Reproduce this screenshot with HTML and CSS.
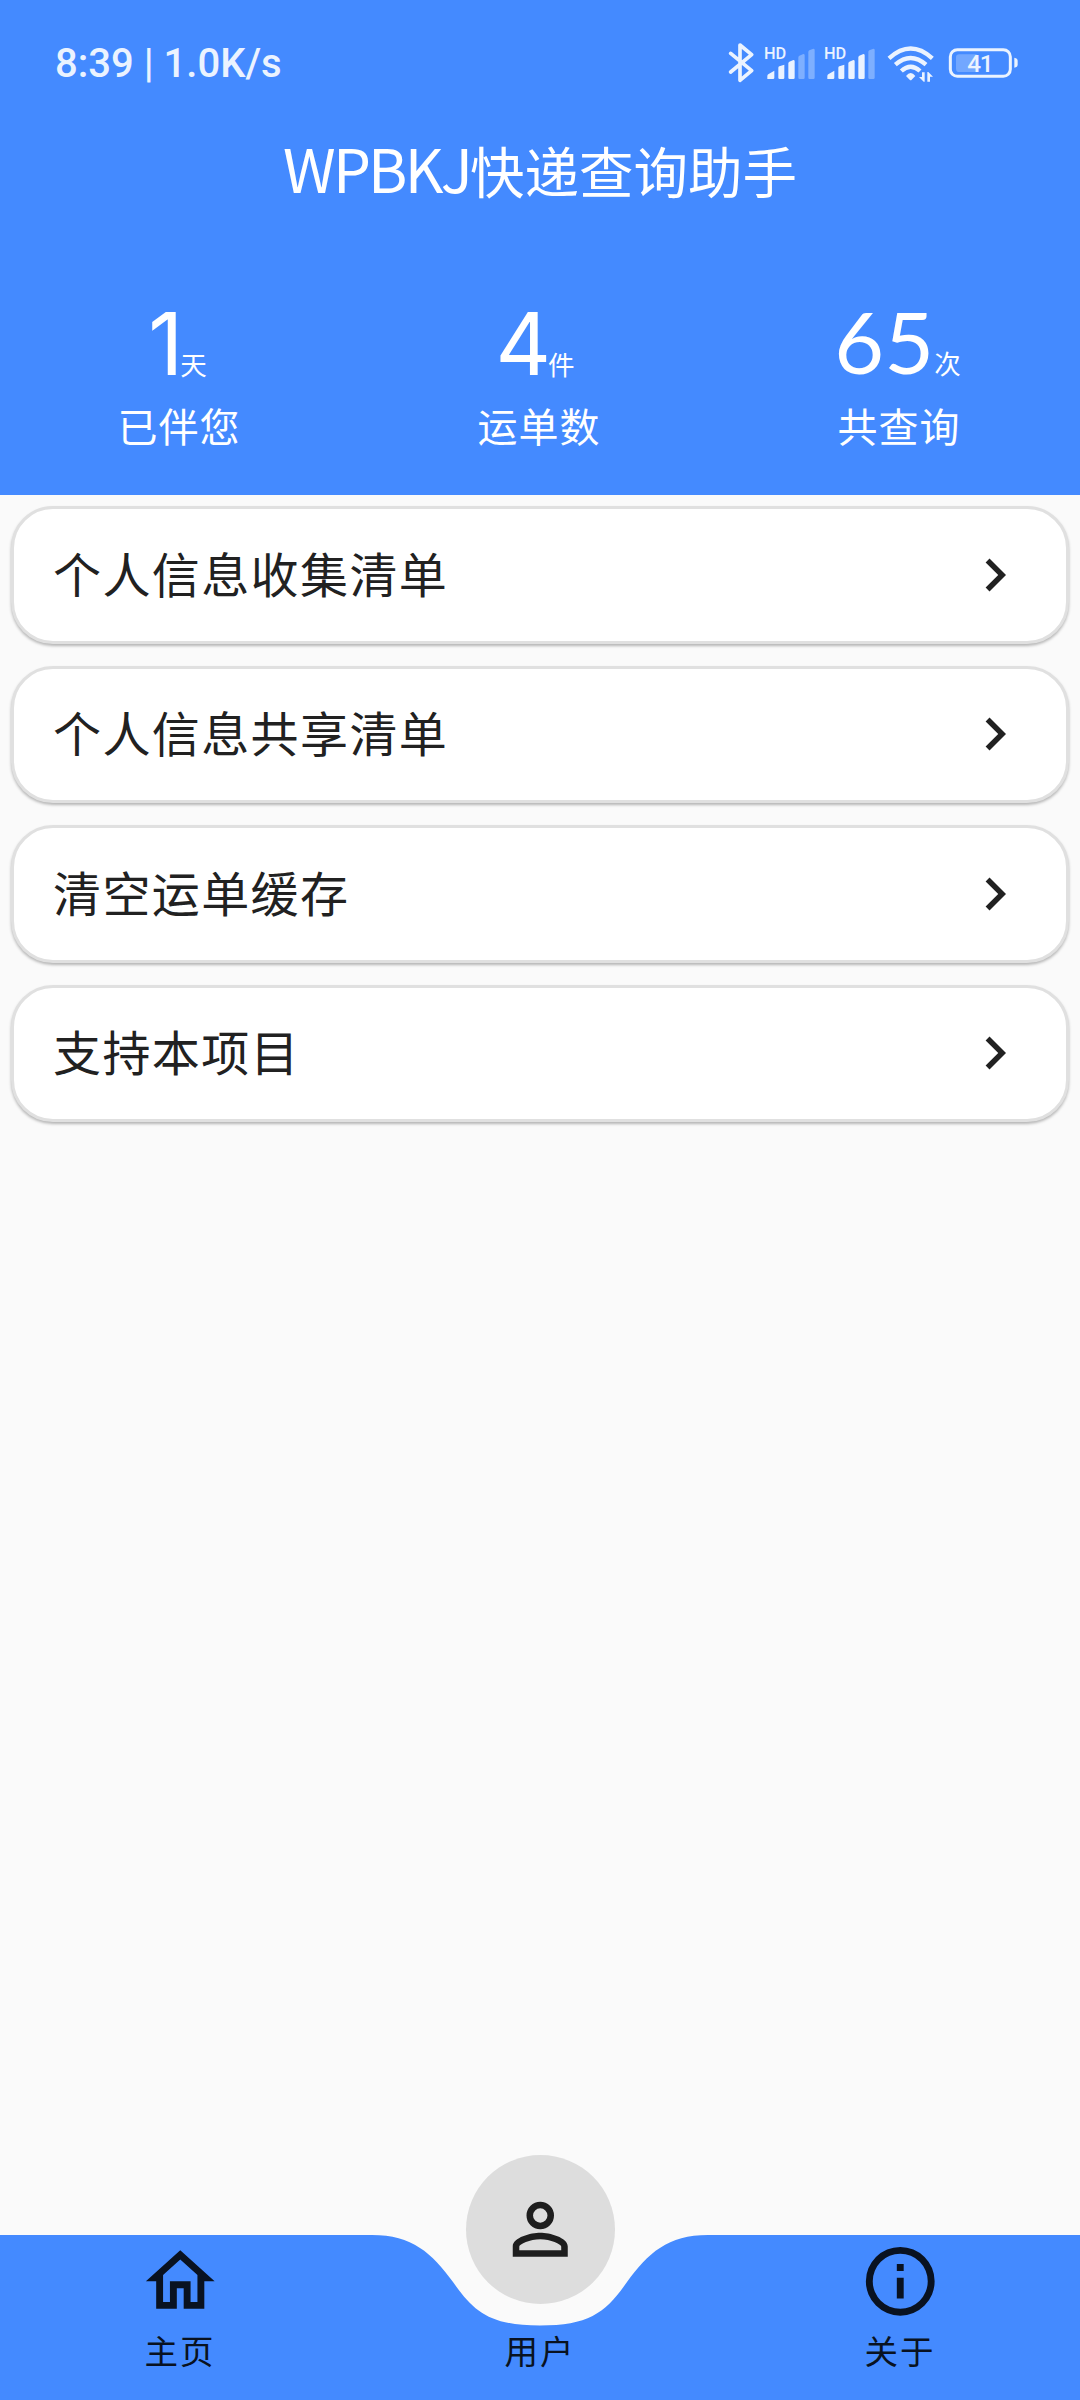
FILE: index.html
```html
<!DOCTYPE html>
<html lang="zh-CN">
<head>
<meta charset="utf-8">
<title>WPBKJ快递查询助手</title>
<link rel="stylesheet" href="styles.css">
</head>
<body>
<svg class="defs" aria-hidden="true">
  <symbol id="chevron" viewBox="0 0 24 24"><path d="M10 6L8.59 7.41 13.17 12l-4.58 4.59L10 18l6-6z"/></symbol>
</svg>
<div class="app">
  <header class="header">
    <div class="status">
      <span class="status-text">8:39 | 1.0K/s</span>
      <div class="status-icons">
        <svg class="bluetooth" viewBox="54 60 78 135"><path d="M62 100L125 152L90 181V75L125 104L62 156" fill="none" stroke="currentColor" stroke-width="11" stroke-linejoin="round" stroke-linecap="round"/></svg>
        <svg class="signal" viewBox="162 60 156 135">
          <text x="162" y="117" class="hd">HD</text>
          <path d="M172 177v-9q0-4 4-6l17-10v21q0 4-4 4zM205 177v-34q0-3 3-4l15-5v39q0 4-4 4h-10q-4 0-4-4zM235 173v-43q0-3 3-5l12-5q4 0 4 4v49q0 4-4 4h-11q-4 0-4-4z"/>
          <path class="dim" d="M265 173v-61q0-3 3-5l12-5q4 0 4 4v67q0 4-4 4h-11q-4 0-4-4zM295 173v-77q0-3 3-5l12-5q4 0 4 4v83q0 4-4 4h-11q-4 0-4-4z"/>
        </svg>
        <svg class="signal" viewBox="162 60 156 135">
          <text x="162" y="117" class="hd">HD</text>
          <path d="M172 177v-9q0-4 4-6l17-10v21q0 4-4 4zM205 177v-34q0-3 3-4l15-5v39q0 4-4 4h-10q-4 0-4-4zM235 173v-43q0-3 3-5l12-5q4 0 4 4v49q0 4-4 4h-11q-4 0-4-4zM265 173v-61q0-3 3-5l12-5q4 0 4 4v67q0 4-4 4h-11q-4 0-4-4z"/>
          <path class="dim" d="M295 173v-77q0-3 3-5l12-5q4 0 4 4v83q0 4-4 4h-11q-4 0-4-4z"/>
        </svg>
        <svg class="wifi" viewBox="528 60 150 135">
          <g fill="none" stroke="currentColor" stroke-width="13">
            <path d="M537 115Q602 56 667 115"/>
            <path d="M556 134Q602 94 648 134"/>
            <path d="M574 153Q602 127 630 153"/>
          </g>
          <path d="M588 168Q602 150 616 168L605 179Q602 182 599 179zM636 157h8v28h-3l-14-14h9zM652 185v-29h3l14 14h-9v15z"/>
        </svg>
        <svg class="battery" viewBox="714 60 213 135">
          <rect x="721" y="89" width="180" height="80" rx="21" fill="none" stroke="currentColor" stroke-width="9"/>
          <path class="level" d="M748 103h52v53h-52q-10 0-10-10v-33q0-10 10-10z"/>
          <path d="M913 113q10 2 10 9v12q0 7-10 9z"/>
          <text x="809" y="156" text-anchor="middle" class="percent">41</text>
        </svg>
      </div>
    </div>
    <h1 class="title"><span class="latin">WPBKJ</span>快递查询助手</h1>
    <div class="stats">
      <div class="stat"><div class="value plain"><b>1</b><small>天</small></div><div class="label">已伴您</div></div>
      <div class="stat"><div class="value plain four"><b>4</b><small>件</small></div><div class="label">运单数</div></div>
      <div class="stat"><div class="value"><b>65</b><small>次</small></div><div class="label">共查询</div></div>
    </div>
  </header>
  <main class="list">
    <a class="card"><span>个人信息收集清单</span><svg><use href="#chevron"/></svg></a>
    <a class="card"><span>个人信息共享清单</span><svg><use href="#chevron"/></svg></a>
    <a class="card"><span>清空运单缓存</span><svg><use href="#chevron"/></svg></a>
    <a class="card"><span>支持本项目</span><svg><use href="#chevron"/></svg></a>
  </main>
  <nav class="nav">
    <svg class="nav-bg" viewBox="0 0 1080 165"><path d="M0 0H372C412 0 432 18 453 47C474 77 490 90.5 540 90.5C590 90.5 606 77 627 47C648 18 668 0 708 0H1080V165H0z"/></svg>
    <a class="tab">
      <svg class="icon" viewBox="0 0 24 24"><path d="M12 5.69l5 4.5V18h-2v-6H9v6H7v-7.81l5-4.5M12 3L2 12h3v8h6v-6h2v6h6v-8h3L12 3z"/></svg>
      <span>主页</span>
    </a>
    <a class="tab active">
      <span class="bubble"><svg class="icon" viewBox="0 0 24 24"><path d="M12 5.9a2.1 2.1 0 110 4.2 2.1 2.1 0 010-4.2m0 9c2.97 0 6.1 1.46 6.1 2.1v1.1H5.9V17c0-.64 3.13-2.1 6.1-2.1M12 4a4 4 0 100 8 4 4 0 000-8zm0 9c-2.67 0-8 1.34-8 4v3h16v-3c0-2.66-5.33-4-8-4z"/></svg></span>
      <span>用户</span>
    </a>
    <a class="tab">
      <svg class="icon" viewBox="0 0 24 24"><path d="M11 7h2v2h-2zm0 4h2v6h-2zm1-9a10 10 0 100 20 10 10 0 000-20zm0 18a8 8 0 110-16 8 8 0 010 16z"/></svg>
      <span>关于</span>
    </a>
  </nav>
</div>
</body>
</html>
```
FILE: styles.css
```css
* { box-sizing: border-box; }
body { margin: 0; background: #fafafa; font-family: "Noto Sans CJK SC", sans-serif; }
svg { display: block; fill: currentColor; }
.defs { display: none; }
.app { width: 1080px; height: 2400px; display: flex; flex-direction: column; }

.header { height: 495px; background: #448aff; color: #fff; }
.status { height: 125px; padding: 0 61px 0 55px; display: flex; align-items: center; justify-content: space-between; color: #ebf3ff; }
.status-text { padding-top: 2px; font: 500 40px/60px Roboto, sans-serif; white-space: nowrap; }
.status-icons { display: flex; }
.status-icons svg { height: 45px; }
.bluetooth { width: 26px; margin-right: 10px; }
.signal { width: 52px; margin-right: 8px; }
.wifi { width: 50px; margin: 0 12px 0 2px; }
.battery { width: 71px; }
.dim { opacity: .35; }
.level { opacity: .28; }
.hd { font: 500 49px Roboto, sans-serif; }
.percent { font: 500 73px Roboto, sans-serif; letter-spacing: -4px; }

.title { margin: 0; height: 96px; padding-top: 1px; font-size: 54.5px; font-weight: 400; line-height: 88px; text-align: center; white-space: nowrap; }
.latin { font-size: 60px; line-height: 1; letter-spacing: -2.8px; }

.stats { display: grid; grid-template-columns: repeat(3, 1fr); padding-top: 67px; }
.stat { display: flex; flex-direction: column; align-items: center; }
.value { height: 109px; padding: 1px 5px 0 0; display: flex; align-items: baseline; line-height: 104px; }
.value b { font-family: Lato, sans-serif; font-weight: 400; font-size: 86px; }
.plain { padding-top: 4px; }
.plain b { font-family: Inter, sans-serif; font-size: 86px; letter-spacing: -3px; }
.four { padding-right: 10px; }
.value small { font-size: 26.5px; }
.label { margin-left: -2px; font-size: 40px; line-height: 56px; letter-spacing: 1px; }

.list { flex: 1; padding: 11px 11px 0; display: flex; flex-direction: column; gap: 22px; }
.card { height: 137.5px; padding: 0 38px 0 39px; display: flex; align-items: center; justify-content: space-between; background: #fff; border: 3px solid #e0e0e0; border-radius: 42px; box-shadow: 0 2px 3px rgba(0,0,0,.28); color: #212121; }
.card span { padding-bottom: 6px; font-size: 48px; line-height: 70px; letter-spacing: 1.4px; }
.card svg { width: 66px; height: 66px; }

.nav { position: relative; height: 165px; display: grid; grid-template: 165px / repeat(3, 1fr); color: #091221; }
.nav-bg { position: absolute; inset: 0; width: 1080px; height: 165px; fill: #448aff; }
.tab { position: relative; display: flex; flex-direction: column; align-items: center; justify-content: flex-end; padding-bottom: 26px; font-size: 33.5px; line-height: 48px; letter-spacing: 2px; }
.icon { width: 82.5px; height: 82.5px; margin-bottom: 4px; }
.bubble { width: 149px; height: 149px; margin-bottom: 22px; display: grid; place-items: center; flex: none; border-radius: 50%; background: #ddd; color: #1e1e1e; }
.bubble .icon { margin: 0; }
```
